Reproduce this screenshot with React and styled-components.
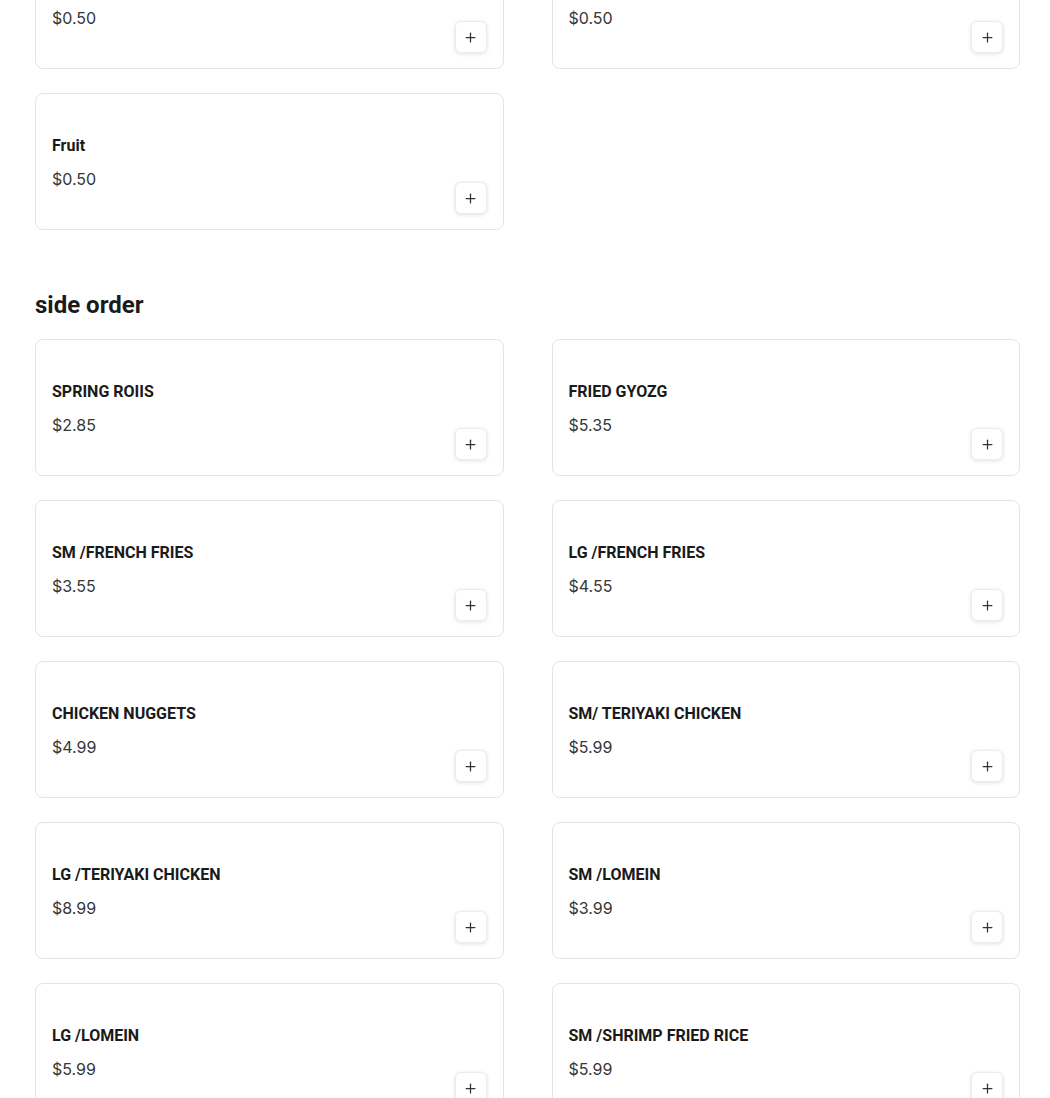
import React from 'react';
import styled, { createGlobalStyle } from 'styled-components';
import { Plus } from 'lucide-react';

const GlobalStyle = createGlobalStyle`
  body {
    margin: 0;
    background: #ffffff;
    font-family: Roboto, "Liberation Sans", sans-serif;
    color: #1a1a1a;
  }
`;

const Page = styled.div`
  width: 985px;
  margin: -68px 0 0 35px;
`;

const Section = styled.section`
  & + & {
    margin-top: 59px;
  }
`;

const SectionTitle = styled.h2`
  margin: 0 0 18px;
  font-size: 24px;
  line-height: 32px;
  font-weight: 700;
  color: #1a1a1a;
`;

const Grid = styled.div`
  display: grid;
  grid-template-columns: 1fr 1fr;
  column-gap: 48px;
  row-gap: 24px;
`;

const Card = styled.div`
  box-sizing: border-box;
  height: 137px;
  display: flex;
  align-items: flex-end;
  justify-content: space-between;
  padding: 16px 16px 15px;
  border: 1px solid #e4e4e4;
  border-radius: 8px;
  background: #fff;
`;

const Info = styled.div`
  align-self: flex-start;
  padding-top: 26px;
`;

const Name = styled.div`
  font-size: 16px;
  line-height: 20px;
  font-weight: 700;
  color: #1a1a1a;
  margin-bottom: 13px;
`;

const Price = styled.div`
  font-family: Inter, "Open Sans", sans-serif;
  font-size: 16px;
  line-height: 20px;
  font-weight: 400;
  color: #363636;
`;

const AddButton = styled.button`
  box-sizing: border-box;
  width: 32px;
  height: 32px;
  display: flex;
  align-items: center;
  justify-content: center;
  padding: 0;
  border: 1px solid #ececec;
  border-radius: 6px;
  background: #fff;
  color: #333;
  box-shadow: 0 1px 4px rgba(0, 0, 0, 0.12);
  cursor: pointer;
`;

const sections = [
  {
    title: null,
    items: [
      { name: 'Cookie', price: '0.50' },
      { name: 'Sauce', price: '0.50' },
      { name: 'Fruit', price: '0.50' },
    ],
  },
  {
    title: 'side order',
    items: [
      { name: 'SPRING ROIIS', price: '2.85' },
      { name: 'FRIED GYOZG', price: '5.35' },
      { name: 'SM /FRENCH FRIES', price: '3.55' },
      { name: 'LG /FRENCH FRIES', price: '4.55' },
      { name: 'CHICKEN NUGGETS', price: '4.99' },
      { name: 'SM/ TERIYAKI CHICKEN', price: '5.99' },
      { name: 'LG /TERIYAKI CHICKEN', price: '8.99' },
      { name: 'SM /LOMEIN', price: '3.99' },
      { name: 'LG /LOMEIN', price: '5.99' },
      { name: 'SM /SHRIMP FRIED RICE', price: '5.99' },
    ],
  },
];

const MenuItem = ({ name, price }) => (
  <Card>
    <Info>
      <Name>{name}</Name>
      <Price>${price}</Price>
    </Info>
    <AddButton aria-label={`Add ${name}`}>
      <Plus size={15} strokeWidth={2} />
    </AddButton>
  </Card>
);

const App = () => {
  return (
    <>
      <GlobalStyle />
      <Page>
        {sections.map((section, i) => (
          <Section key={i}>
            {section.title && <SectionTitle>{section.title}</SectionTitle>}
            <Grid>
              {section.items.map((item) => (
                <MenuItem key={item.name} {...item} />
              ))}
            </Grid>
          </Section>
        ))}
      </Page>
    </>
  );
};

export default App;
